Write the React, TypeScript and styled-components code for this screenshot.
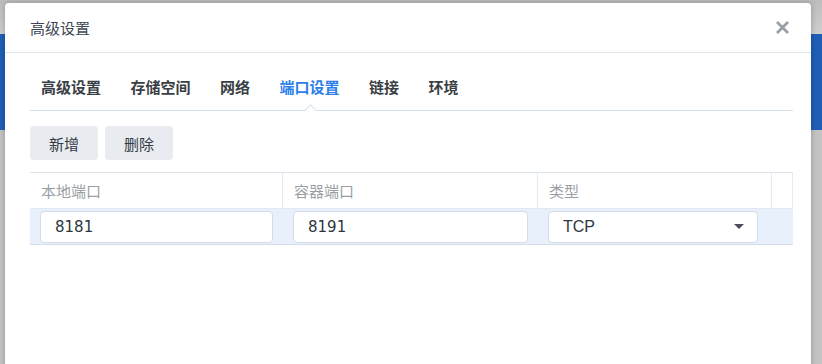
import React from "react";
import styled, {createGlobalStyle} from "styled-components";

const GlobalStyle = createGlobalStyle`
  html, body {
    margin: 0;
    padding: 0;
    background: #c6c6c6;
    font-family: "Liberation Sans", "Noto Sans CJK SC", sans-serif;
  }
  * {
    box-sizing: border-box;
  }
`;

const tabs = ["高级设置", "存储空间", "网络", "端口设置", "链接", "环境"];

const ports = [{local: "8181", container: "8191", type: "TCP"}];

const App = () => {
  return (
    <>
      <GlobalStyle />
      <Page>
        <TopStrip />
        <BlueBand />
        <Rest />
        <Dialog>
          <Header>
            <Title>高级设置</Title>
            <CloseButton aria-label="close">
              <svg width="15" height="15" viewBox="0 0 15 15">
                <path d="M2 2 L13 13 M13 2 L2 13" stroke="#9a9fa6" strokeWidth="2.8" />
              </svg>
            </CloseButton>
          </Header>
          <Body>
            <TabBar>
              {tabs.map((t) => (
                <Tab key={t} $active={t === "端口设置"}>
                  {t}
                </Tab>
              ))}
            </TabBar>
            <Toolbar>
              <ToolButton>新增</ToolButton>
              <ToolButton>删除</ToolButton>
            </Toolbar>
            <Table>
              <HeadRow>
                <HeadCell>本地端口</HeadCell>
                <HeadCell>容器端口</HeadCell>
                <HeadCell>类型</HeadCell>
                <HeadCell />
              </HeadRow>
              {ports.map((p, i) => (
                <BodyRow key={i}>
                  <Cell>
                    <Field defaultValue={p.local} />
                  </Cell>
                  <Cell>
                    <Field defaultValue={p.container} />
                  </Cell>
                  <Cell>
                    <SelectBox>
                      <span>{p.type}</span>
                      <Caret />
                    </SelectBox>
                  </Cell>
                  <Cell />
                </BodyRow>
              ))}
            </Table>
          </Body>
        </Dialog>
      </Page>
    </>
  );
};

export default App;

const Page = styled.div`
  position: relative;
  width: 822px;
  height: 364px;
  overflow: hidden;
  display: flex;
  flex-direction: column;
`;

const TopStrip = styled.div`
  height: 34px;
  background: linear-gradient(#bdbdbd, #cfcfcf);
`;

const BlueBand = styled.div`
  height: 96px;
  background: #1f5fb6;
`;

const Rest = styled.div`
  flex: 1;
  background: #c4c4c4;
`;

const Dialog = styled.section`
  position: absolute;
  left: 5px;
  top: 3px;
  width: 806px;
  height: 380px;
  background: #fff;
  border-radius: 4px;
  box-shadow: 0 0 6px rgba(0, 0, 0, 0.25);
`;

const Header = styled.header`
  height: 50px;
  display: flex;
  align-items: center;
  justify-content: space-between;
  padding: 0 19px 0 25px;
  border-bottom: 1px solid #dfe6ee;
`;

const Title = styled.h2`
  margin: 0;
  font-size: 15px;
  font-weight: normal;
  color: #3c4654;
`;

const CloseButton = styled.button`
  width: 20px;
  height: 20px;
  padding: 0;
  border: none;
  background: none;
  display: flex;
  align-items: center;
  justify-content: center;
`;

const Body = styled.div`
  padding: 0 18px 0 25px;
`;

const TabBar = styled.nav`
  display: flex;
  height: 58px;
  align-items: flex-end;
  padding-left: 11px;
  gap: 29.5px;
  border-bottom: 1px solid #d6e0ea;
`;

const Tab = styled.div<{$active?: boolean}>`
  position: relative;
  height: 34px;
  font-size: 15px;
  font-weight: bold;
  color: ${(p) => (p.$active ? "#2b7de9" : "#3a3f46")};

  &::after {
    content: "";
    display: ${(p) => (p.$active ? "block" : "none")};
    position: absolute;
    left: 50%;
    bottom: -5px;
    width: 8px;
    height: 8px;
    margin-left: -4px;
    background: #fff;
    border-left: 1px solid #d6e0ea;
    border-top: 1px solid #d6e0ea;
    transform: rotate(45deg);
  }
`;

const Toolbar = styled.div`
  display: flex;
  gap: 7px;
  padding: 15px 0 12px;
`;

const ToolButton = styled.button`
  width: 68px;
  height: 34px;
  border: none;
  border-radius: 4px;
  background: #e8ecf0;
  color: #333a44;
  font-family: "Liberation Sans", "Noto Sans CJK SC", sans-serif;
  font-size: 15px;
`;

const Table = styled.div`
  border-top: 1px solid #dae2ea;
`;

const HeadRow = styled.div`
  display: grid;
  grid-template-columns: 253px 255px 234px 1fr;
  height: 35px;
`;

const HeadCell = styled.div`
  display: flex;
  align-items: center;
  padding-left: 11px;
  font-size: 15px;
  color: #9a9fa6;
  border-right: 1px solid #e6ebf1;
`;

const BodyRow = styled.div`
  display: grid;
  grid-template-columns: 253px 255px 234px 1fr;
  height: 37px;
  background: #e8f0fc;
  border-bottom: 1px solid #d4dde8;
  border-top: 1px solid #e2e9f2;
`;

const Cell = styled.div`
  display: flex;
  align-items: center;
  padding: 0 10px;
`;

const Field = styled.input`
  width: 100%;
  height: 32px;
  border: 1px solid #d3dce8;
  border-radius: 4px;
  background: #fff;
  padding: 0 14px;
  font-family: "DejaVu Sans", "Liberation Sans", sans-serif;
  font-size: 15px;
  color: #2e3640;
  outline: none;
`;

const SelectBox = styled.div`
  width: 100%;
  height: 32px;
  margin-right: 4px;
  border: 1px solid #d3dce8;
  border-radius: 4px;
  background: #fff;
  padding: 0 13px 0 14px;
  display: flex;
  align-items: center;
  justify-content: space-between;
  font-size: 16px;
  color: #2e3640;
`;

const Caret = styled.span`
  width: 0;
  height: 0;
  border-left: 5px solid transparent;
  border-right: 5px solid transparent;
  border-top: 5px solid #4a4f57;
`;
